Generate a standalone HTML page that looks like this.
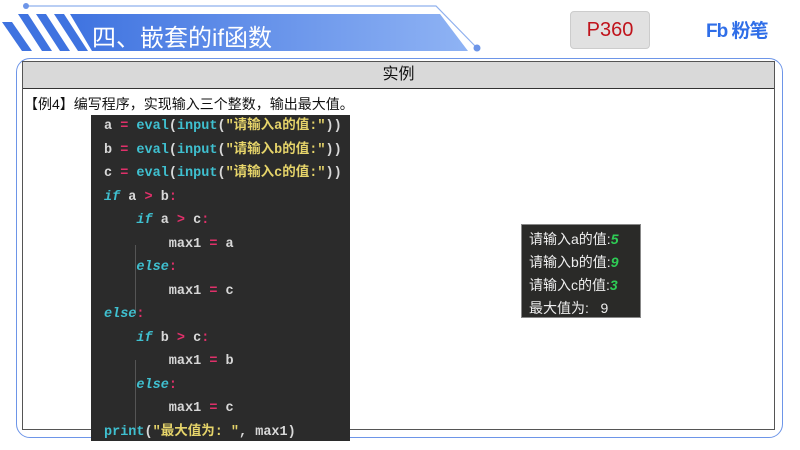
<!DOCTYPE html>
<html><head><meta charset="utf-8"><style>
body{margin:0;width:800px;height:450px;background:#fff;position:relative;overflow:hidden;font-family:"Liberation Sans","Noto Sans CJK SC",sans-serif}
.abs{position:absolute}
.code{left:91px;top:115px;width:259px;height:326px;background:#2b2b2b;font-family:"Liberation Mono","Noto Sans CJK SC",monospace;font-size:13.5px;color:#d8d8d8;font-weight:bold}
.ln{position:absolute;left:13px;white-space:pre;line-height:23.5px}
.k{color:#3fc0d0;font-style:italic}.f{color:#3fc0d0}.o{color:#e0306a}.s{color:#e6d46a}
.out{left:521px;top:224px;width:120px;height:94px;background:#2a2a28;border:1px solid #888;box-sizing:border-box;color:#eee;font-size:14px}
.out div{position:absolute;left:7px;white-space:pre}
.g{color:#2ecc55;font-style:italic;font-weight:bold}
</style></head><body>
<svg class="abs" style="left:0;top:0" width="800" height="60">
<defs><linearGradient id="bg" x1="0" x2="1"><stop offset="0" stop-color="#3f73e0"/><stop offset="1" stop-color="#8fb3f4"/></linearGradient></defs>
<polygon points="70,14 440,14 468,51 92,51" fill="url(#bg)"/>
<polygon points="2,22 12,22 32,51 22,51" fill="#3f73e0"/>
<polygon points="18,14 28,14 52,51 42,51" fill="#3f73e0"/>
<polygon points="36,14 46,14 70,51 60,51" fill="#3f73e0"/>
<polygon points="54,14 64,14 88,51 78,51" fill="#3f73e0"/>
<polyline points="26,6 436,6 477,48" fill="none" stroke="#8fb0ee" stroke-width="1.2"/>
<circle cx="26" cy="6" r="3" fill="#6d95e8"/><circle cx="477" cy="48" r="3.5" fill="#6d95e8"/>
</svg>
<div class="abs" style="left:92px;top:18px;color:#fff;font-size:24px">四、嵌套的if函数</div>
<div class="abs" style="left:570px;top:11px;width:80px;height:38px;background:#e1e1e1;border-radius:4px;border:1px solid #ccc;box-sizing:border-box;color:#c0141c;font-size:20px;text-align:center;line-height:36px">P360</div>
<div class="abs" style="left:706px;top:16px;color:#2f6ee8;font-size:19px;font-weight:bold;letter-spacing:-1px">Fb 粉笔</div>
<div class="abs" style="left:16px;top:58px;width:767px;height:380px;border:1.5px solid #6d95e8;border-radius:14px;box-sizing:border-box"></div>
<div class="abs" style="left:22px;top:61px;width:753px;height:369px;border:1.5px solid #555;box-sizing:border-box"></div>
<div class="abs" style="left:23px;top:62px;width:751px;height:26px;background:#d9d9d9;border-bottom:1.5px solid #333;text-align:center;font-size:16px;line-height:26px;color:#111">实例</div>
<div class="abs" style="left:24px;top:94px;font-size:14px;color:#111">【例4】编写程序，实现输入三个整数，输出最大值。</div>
<div class="abs code">
<div class="abs" style="left:44px;top:130px;width:1px;height:70px;background:#555"></div>
<div class="abs" style="left:44px;top:245px;width:1px;height:70px;background:#555"></div>
<div class="ln" style="top:0">a <span class="o">=</span> <span class="f">eval</span>(<span class="f">input</span>(<span class="s">"请输入a的值:"</span>))</div>
<div class="ln" style="top:23.5px">b <span class="o">=</span> <span class="f">eval</span>(<span class="f">input</span>(<span class="s">"请输入b的值:"</span>))</div>
<div class="ln" style="top:47px">c <span class="o">=</span> <span class="f">eval</span>(<span class="f">input</span>(<span class="s">"请输入c的值:"</span>))</div>
<div class="ln" style="top:70.5px"><span class="k">if</span> a <span class="o">&gt;</span> b<span class="o">:</span></div>
<div class="ln" style="top:94px">    <span class="k">if</span> a <span class="o">&gt;</span> c<span class="o">:</span></div>
<div class="ln" style="top:117.5px">        max1 <span class="o">=</span> a</div>
<div class="ln" style="top:141px">    <span class="k">else</span><span class="o">:</span></div>
<div class="ln" style="top:164.5px">        max1 <span class="o">=</span> c</div>
<div class="ln" style="top:188px"><span class="k">else</span><span class="o">:</span></div>
<div class="ln" style="top:211.5px">    <span class="k">if</span> b <span class="o">&gt;</span> c<span class="o">:</span></div>
<div class="ln" style="top:235px">        max1 <span class="o">=</span> b</div>
<div class="ln" style="top:258.5px">    <span class="k">else</span><span class="o">:</span></div>
<div class="ln" style="top:282px">        max1 <span class="o">=</span> c</div>
<div class="ln" style="top:305.5px"><span class="f">print</span>(<span class="s">"最大值为: "</span>, max1)</div>
</div>
<div class="abs out">
<div style="top:4px">请输入a的值:<span class="g">5</span></div>
<div style="top:27px">请输入b的值:<span class="g">9</span></div>
<div style="top:50px">请输入c的值:<span class="g">3</span></div>
<div style="top:73px">最大值为:   9</div>
</div>
</body></html>
